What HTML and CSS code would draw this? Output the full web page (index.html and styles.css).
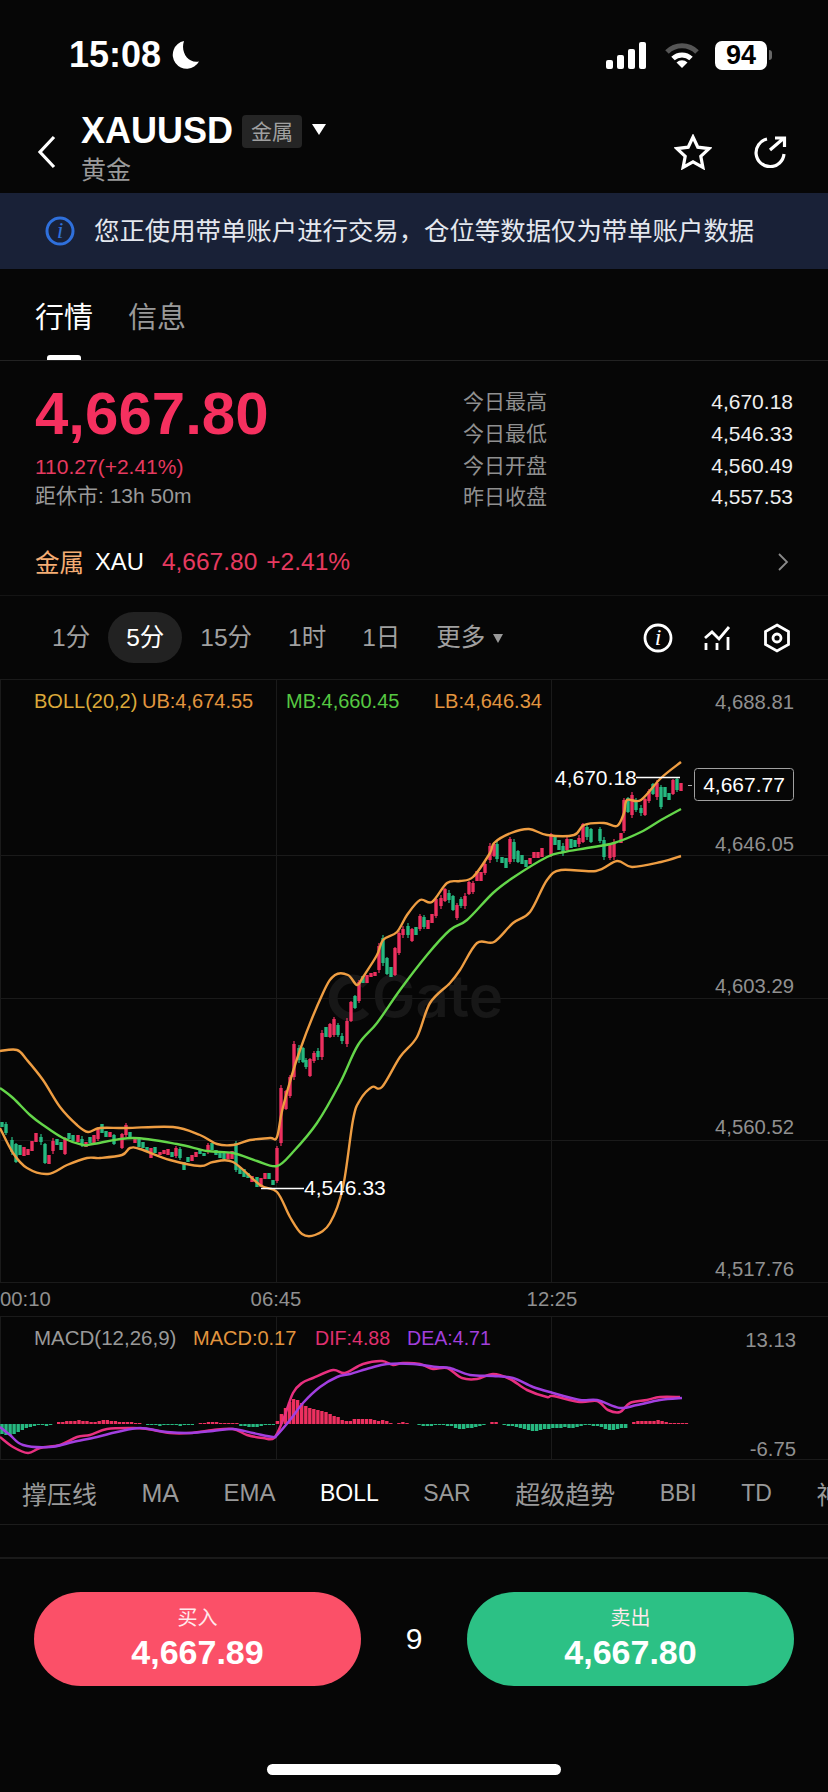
FILE: index.html
```html
<!DOCTYPE html>
<html lang="zh-CN">
<head>
  <meta charset="utf-8">
  <title>XAUUSD 黄金</title>
  <link rel="stylesheet" href="styles.css">
</head>
<body>
  <div class="page">

    <div class="statusBar">
      <span class="clock">15:08</span>
      <svg class="moon" width="30" height="30" viewBox="0 0 30 30">
        <path class="fillWhite" d="M14 1a14 14 0 1 0 15 20.500C19 24 10 13 14 1z"/>
      </svg>
      <span class="statusFill"></span>
      <svg class="signal" width="41" height="27" viewBox="0 0 41 27">
        <rect class="fillWhite" x="0" y="18" width="7" height="9" rx="2"/>
        <rect class="fillWhite" x="11" y="13" width="7" height="14" rx="2"/>
        <rect class="fillWhite" x="22" y="7" width="7" height="20" rx="2"/>
        <rect class="fillWhite" x="33" y="0" width="7" height="27" rx="2"/>
      </svg>
      <svg class="wifi" width="36" height="27" viewBox="0 0 36 27">
        <path class="wifiDim" d="M3 10a21 21 0 0 1 30 0"/>
        <path class="wifiOn" d="M9 16.500a13 13 0 0 1 18 0"/>
        <path class="fillWhite" d="M18 26l-5.500-5.500a8 8 0 0 1 11 0z"/>
      </svg>
      <span class="battery">94</span>
      <span class="batteryNub"></span>
    </div>

    <div class="navBar">
      <svg class="backIcon" width="20" height="34" viewBox="0 0 20 34">
        <path class="strokeWhite" d="M17 2L3 17l14 15"/>
      </svg>
      <div class="navTitle">
        <div class="symbolRow">
          <span class="symbol">XAUUSD</span>
          <span class="symbolTag">金属</span>
          <span class="caretDown"></span>
        </div>
        <div class="symbolName">黄金</div>
      </div>
      <svg class="starIcon" width="38" height="36" viewBox="0 0 38 36">
        <path class="strokeWhite" d="M19 3l4.800 10.200 11.200 1.400-8.200 7.700 2.100 11.100L19 27.900 9.100 33.400l2.100-11.100L3 14.600l11.200-1.400z"/>
      </svg>
      <svg class="shareIcon" width="34" height="32" viewBox="0 0 34 32">
        <path class="strokeWhite" d="M14 3A14 14 0 1 0 31 18"/>
        <path class="strokeWhite" d="M17 14L31 2M22 2h9.500v9"/>
      </svg>
    </div>

    <div class="notice">
      <svg class="noticeIcon" width="30" height="30" viewBox="0 0 30 30">
        <circle class="blueRing" cx="15" cy="15" r="13"/>
        <text class="noticeI" x="15" y="22" text-anchor="middle">i</text>
      </svg>
      <span class="noticeText">您正使用带单账户进行交易，仓位等数据仅为带单账户数据</span>
    </div>

    <div class="tabs">
      <span class="tab tabOn">行情</span>
      <span class="tab">信息</span>
      <span class="tabLine"></span>
    </div>

    <div class="quote">
      <div class="quoteTop">
        <div class="quoteLeft">
          <div class="lastPrice">4,667.80</div>
          <div class="priceChange">110.27(+2.41%)</div>
          <div class="closeTime">距休市: 13h 50m</div>
        </div>
        <div class="quoteStats">
          <span class="statName">今日最高</span><span class="statValue">4,670.18</span>
          <span class="statName">今日最低</span><span class="statValue">4,546.33</span>
          <span class="statName">今日开盘</span><span class="statValue">4,560.49</span>
          <span class="statName">昨日收盘</span><span class="statValue">4,557.53</span>
        </div>
      </div>
      <div class="sector">
        <span class="sectorName">金属</span>
        <span class="sectorCode">XAU</span>
        <span class="sectorPrice">4,667.80</span>
        <span class="sectorPct">+2.41%</span>
        <span class="statusFill"></span>
        <svg width="12" height="20" viewBox="0 0 12 20">
          <path class="strokeGrey" d="M2 2l8 8-8 8"/>
        </svg>
      </div>
    </div>

    <div class="intervals">
      <span class="interval">1分</span>
      <span class="interval intervalOn">5分</span>
      <span class="interval">15分</span>
      <span class="interval">1时</span>
      <span class="interval">1日</span>
      <span class="interval">更多</span>
      <span class="caretSmall"></span>
      <span class="statusFill"></span>
      <svg class="toolIcon" width="30" height="30" viewBox="0 0 30 30">
        <circle class="strokeThin" cx="15" cy="15" r="13"/>
        <text class="toolI" x="15" y="22" text-anchor="middle">i</text>
      </svg>
      <svg class="toolIcon toolChart" width="28" height="26" viewBox="0 0 28 26">
        <path class="strokeThin" d="M2 13l7-6 7 7 10-12M3 18v7M14 18v7M25 12v13"/>
      </svg>
      <svg class="toolIcon toolHex" width="30" height="30" viewBox="0 0 30 30">
        <path class="strokeThin" d="M15 2l11.500 6.500v13L15 28 3.500 21.500v-13z"/>
        <circle class="strokeThin" cx="15" cy="15" r="4"/>
      </svg>
    </div>

    <!-- chart uses page coordinates, viewBox starts at the top of the chart -->
    <svg class="chart" width="828" height="781" viewBox="0 679 828 781">
      <g class="grid">
        <path d="M0 679.500H828M0 855.500H828M0 998.500H828M0 1140.500H828M0 1282.500H828M0 1316.500H828M0 1459.500H828"/>
        <path d="M.5 679V1282M276.500 679V1282M551.500 679V1282M.5 1316V1460M276.500 1316V1460M551.500 1316V1460"/>
      </g>

      <g class="watermark">
        <path class="markRing" d="M366 985a19 19 0 1 0 0 26"/>
        <text class="markText" x="372" y="1017">Gate</text>
      </g>

      <g id="candles"></g>

      <polyline class="smooth band bandOuter" points="0,1051 17,1050 27,1060 43,1080 60,1107 77,1125 88,1132 100,1128 127,1128 173,1127 200,1135 217,1144 233,1145 250,1140 270,1138 277,1137 283,1107 300,1050 323,993 335,975 348,975 357,985 363,977 377,955 383,940 397,932 407,915 420,900 432,902 447,883 460,881 473,877 490,853 494,843 511,833 529,829 547,835 574,835 584,825 604,823 617,826 624,813 627,800 641,800 661,778 681,762"/>
      <polyline class="smooth band bandMid" points="0,1088 13,1098 30,1115 43,1125 63,1138 83,1145 93,1144 133,1138 177,1144 207,1151 233,1153 257,1161 277,1166 293,1152 317,1123 340,1083 358,1045 377,1023 400,990 427,955 450,930 467,920 493,893 514,877 547,857 564,852 587,848 614,843 641,832 661,820 681,809"/>
      <polyline class="smooth band bandOuter" points="0,1128 13,1153 27,1168 48,1174 67,1165 87,1158 100,1158 122,1155 130,1148 140,1149 170,1160 200,1166 213,1162 233,1162 260,1185 277,1192 290,1217 302,1234 315,1235 330,1223 343,1187 353,1120 360,1100 372,1087 382,1087 400,1057 417,1037 430,1003 450,983 460,970 477,943 494,942 513,923 530,912 547,880 561,870 596,871 617,861 632,867 661,862 681,856"/>

      <text class="legend legBoll" x="34" y="708">BOLL(20,2)</text>
      <text class="legend legUb" x="142" y="708">UB:4,674.55</text>
      <text class="legend legMb" x="286" y="708">MB:4,660.45</text>
      <text class="legend legUb" x="434" y="708">LB:4,646.34</text>

      <text class="axis" x="715" y="709">4,688.81</text>
      <text class="axis" x="715" y="851">4,646.05</text>
      <text class="axis" x="715" y="993">4,603.29</text>
      <text class="axis" x="715" y="1134">4,560.52</text>
      <text class="axis" x="715" y="1276">4,517.76</text>

      <path class="marker" d="M636 777.500H680M261 1188.500H304"/>
      <text class="extreme" x="555" y="785">4,670.18</text>
      <text class="extreme" x="304" y="1195">4,546.33</text>

      <path class="priceDash" d="M688 785.500H692"/>
      <rect class="priceBox" x="694.500" y="768.500" width="99" height="32" rx="3"/>
      <text class="priceTag" x="744" y="792" text-anchor="middle">4,667.77</text>

      <text class="axis" x="0" y="1306">00:10</text>
      <text class="axis" x="276" y="1306" text-anchor="middle">06:45</text>
      <text class="axis" x="552" y="1306" text-anchor="middle">12:25</text>

      <text class="legend legMacd" x="34" y="1345">MACD(12,26,9)</text>
      <text class="legend legUb" x="193" y="1345">MACD:0.17</text>
      <text class="legend legDif" x="315" y="1345">DIF:4.88</text>
      <text class="legend legDea" x="407" y="1345">DEA:4.71</text>
      <text class="axis" x="796" y="1347" text-anchor="end">13.13</text>
      <text class="axis" x="796" y="1456" text-anchor="end">-6.75</text>

      <g id="histogram"></g>
      <polyline class="smooth macdLine dif" points="0,1437 13,1447 28,1453 40,1448 60,1445 77,1437 90,1435 107,1429 133,1428 147,1429 170,1433 190,1433 213,1430 233,1429 247,1435 263,1438 274,1438 283,1420 293,1393 302,1383 313,1378 333,1370 345,1373 363,1364 382,1361 393,1365 403,1363 420,1364 433,1369 447,1368 462,1378 477,1379 493,1374 510,1379 527,1390 547,1397 553,1396 580,1402 597,1401 608,1410 620,1412 630,1403 647,1400 660,1397 680,1397"/>
      <polyline class="smooth macdLine dea" points="0,1427 10,1435 23,1445 50,1447 73,1442 97,1437 117,1432 140,1428 167,1432 190,1433 213,1431 233,1429 253,1433 273,1437 277,1435 290,1420 303,1403 320,1387 337,1377 350,1374 370,1368 387,1364 413,1364 437,1367 450,1368 470,1375 493,1376 513,1378 533,1387 553,1393 580,1400 597,1400 620,1408 637,1405 660,1400 682,1398"/>
    </svg>

    <div class="indicators">
      <span class="indicatorCjk">撑压线</span>
      <span class="indicatorWide">MA</span>
      <span class="indicatorEma">EMA</span>
      <span class="indicatorOn">BOLL</span>
      <span>SAR</span>
      <span class="indicatorCjk">超级趋势</span>
      <span>BBI</span>
      <span>TD</span>
      <span class="indicatorCjk">神奇九转</span>
    </div>
    <div class="indicatorGap"></div>

    <div class="trade">
      <div class="tradeButton buy">
        <span class="tradeLabel">买入</span>
        <span class="tradePrice">4,667.89</span>
      </div>
      <div class="spread">9</div>
      <div class="tradeButton sell">
        <span class="tradeLabel">卖出</span>
        <span class="tradePrice">4,667.80</span>
      </div>
    </div>
    <div class="homeBar"></div>

  </div>
  <script src="chart.js"></script>
</body>
</html>
```

FILE: styles.css
```css
* {
    box-sizing: border-box;
}

body {
    margin: 0;
    background: #060606;
    color: #ffffff;
    font-family: "Liberation Sans", "Noto Sans CJK SC", sans-serif;
}

.page {
    width: 828px;
    height: 1792px;
    overflow: hidden;
}

.fillWhite {
    fill: #ffffff;
}

.strokeWhite {
    fill: none;
    stroke: #ffffff;
    stroke-width: 3.2;
}

.strokeGrey {
    fill: none;
    stroke: #8a8a8a;
    stroke-width: 1.800;
}

.strokeThin {
    fill: none;
    stroke: #ffffff;
    stroke-width: 2.800;
}

/* status bar */
.statusBar {
    display: flex;
    align-items: center;
    height: 100px;
    padding: 10px 56px 0 69px;
}

.statusFill {
    flex: 1;
}

.clock {
    font-size: 36px;
    font-weight: bold;
}

.moon {
    margin-left: 9px;
}

.wifi {
    margin-left: 17px;
}

.wifiDim {
    fill: none;
    stroke: #555555;
    stroke-width: 5;
}

.wifiOn {
    fill: none;
    stroke: #ffffff;
    stroke-width: 5;
}

.battery {
    width: 52px;
    height: 29px;
    margin-left: 15px;
    background: #ffffff;
    border-radius: 7px;
    color: #000000;
    font-size: 27px;
    font-weight: bold;
    line-height: 29px;
    text-align: center;
}

.batteryNub {
    width: 3px;
    height: 10px;
    margin-left: 2px;
    background: #666666;
    border-radius: 0 3px 3px 0;
}

/* nav */
.navBar {
    display: flex;
    align-items: flex-start;
    height: 93px;
    padding-left: 37px;
}

.backIcon {
    margin-top: 35px;
}

.navTitle {
    width: 593px;
    margin-left: 24px;
    padding-top: 13px;
}

.symbolRow {
    display: flex;
    align-items: center;
    height: 36px;
}

.symbol {
    font-size: 36px;
    font-weight: bold;
}

.symbolTag {
    width: 60px;
    height: 33px;
    margin-left: 9px;
    background: #252525;
    border-radius: 4px;
    color: #a0a0a0;
    font-size: 21px;
    line-height: 33px;
    text-align: center;
}

.caretDown {
    width: 0;
    height: 0;
    margin: 0 0 3px 10px;
    border-top: 11px solid #ffffff;
    border-left: 7px solid transparent;
    border-right: 7px solid transparent;
}

.symbolName {
    margin-top: 6px;
    color: #9a9a9a;
    font-size: 25px;
    line-height: 30px;
}

.starIcon {
    margin-top: 34px;
}

.shareIcon {
    margin: 36px 0 0 41px;
}

/* notice */
.notice {
    display: flex;
    align-items: center;
    height: 76px;
    padding-left: 45px;
    background: #192137;
    color: #e4e7ee;
    font-size: 25.400px;
}

.noticeIcon {
    margin-right: 19px;
}

.noticeText {
    margin-bottom: 4px;
}

.blueRing {
    fill: none;
    stroke: #2f70dc;
    stroke-width: 3;
}

.noticeI {
    fill: #2f70dc;
    font-family: "Liberation Serif", serif;
    font-size: 24px;
    font-style: italic;
}

/* tabs */
.tabs {
    display: flex;
    position: relative;
    gap: 35px;
    height: 92px;
    padding: 29px 0 0 35px;
    border-bottom: 1px solid #222222;
}

.tab {
    color: #999999;
    font-size: 29px;
    line-height: 40px;
}

.tabOn {
    color: #ffffff;
}

.tabLine {
    position: absolute;
    left: 47px;
    bottom: 0;
    width: 34px;
    height: 5px;
    background: #ffffff;
    border-radius: 3px 3px 0 0;
}

/* quote */
.quote {
    height: 235px;
    border-bottom: 1px solid #141414;
}

.quoteTop {
    display: flex;
    justify-content: space-between;
    height: 167px;
    padding: 23px 35px 0;
}

.lastPrice {
    color: #f5305f;
    font-size: 60px;
    font-weight: bold;
    line-height: 60px;
}

.priceChange {
    margin-top: 11px;
    color: #e63a60;
    font-size: 21px;
    line-height: 24px;
}

.closeTime {
    margin-top: 5px;
    color: #999999;
    font-size: 21px;
    line-height: 24px;
}

.quoteStats {
    display: grid;
    grid-template-columns: 84px 246px;
    grid-auto-rows: 31.700px;
    align-items: center;
    width: 330px;
    margin-top: 2px;
}

.statName {
    color: #909090;
    font-size: 21px;
    line-height: 31px;
}

.statValue {
    color: #eeeeee;
    font-size: 21px;
    line-height: 31px;
    text-align: right;
}

.sector {
    display: flex;
    align-items: center;
    height: 67px;
    padding: 0 39px 0 35px;
    font-size: 24.500px;
}

.sectorName {
    color: #f4ad74;
}

.sectorCode {
    margin-left: 11px;
    font-size: 23.800px;
}

.sectorPrice {
    margin-left: 18px;
    color: #e63a60;
}

.sectorPct {
    margin-left: 9px;
    color: #e63a60;
}

/* intervals */
.intervals {
    display: flex;
    align-items: center;
    height: 83px;
    padding: 0 36px 0 34px;
}

.interval {
    height: 51px;
    padding: 0 18px;
    border-radius: 26px;
    color: #a0a0a0;
    font-size: 24.500px;
    line-height: 51px;
}

.intervalOn {
    background: #222222;
    color: #ffffff;
}

.caretSmall {
    width: 0;
    height: 0;
    margin: 2px 0 0 -10px;
    border-top: 9px solid #999999;
    border-left: 5.500px solid transparent;
    border-right: 5.500px solid transparent;
}

.toolI {
    fill: #ffffff;
    font-family: "Liberation Serif", serif;
    font-size: 24px;
    font-style: italic;
}

.toolChart {
    margin-left: 30px;
}

.toolHex {
    margin-left: 31px;
}

/* chart */
.chart {
    display: block;
}

.grid path {
    fill: none;
    stroke: #1a1a1a;
    stroke-width: 1;
}

.markRing {
    fill: none;
    stroke: #171717;
    stroke-width: 9;
}

.markText {
    fill: #171717;
    font-family: Inter, "Liberation Sans", sans-serif;
    font-size: 58px;
    font-weight: 600;
}

.band {
    fill: none;
    stroke-width: 2.400;
    stroke-linejoin: round;
}

.bandOuter {
    stroke: #ee9d42;
}

.bandMid {
    stroke: #64d64a;
}

.legend {
    font-size: 20px;
}

.legBoll {
    fill: #dba93a;
}

.legUb {
    fill: #e2953f;
}

.legMb {
    fill: #56c842;
}

.legMacd {
    fill: #999999;
    font-size: 20.500px;
}

.legDif {
    fill: #e0306f;
    font-size: 19.600px;
}

.legDea {
    fill: #a23fdc;
    font-size: 19.600px;
}

.axis {
    fill: #909090;
    font-size: 20.300px;
}

.extreme {
    fill: #ffffff;
    font-size: 21px;
}

.marker {
    fill: none;
    stroke: #ffffff;
    stroke-width: 1.500;
}

.priceDash {
    fill: none;
    stroke: #aaaaaa;
    stroke-width: 1;
}

.priceBox {
    fill: #060606;
    stroke: #a0a0a0;
    stroke-width: 1;
}

.priceTag {
    fill: #ffffff;
    font-size: 21px;
}

.wick {
    fill: none;
    stroke-width: 1.200;
}

.body {
    fill: none;
    stroke-width: 3.400;
}

.up {
    stroke: #ec305f;
}

.down {
    stroke: #26b880;
}

.macdLine {
    fill: none;
    stroke-width: 2.500;
    stroke-linejoin: round;
}

.dif {
    stroke: #e8307f;
}

.dea {
    stroke: #a23fe0;
}

/* indicator tabs */
.indicators {
    display: flex;
    align-items: center;
    gap: 44.500px;
    height: 65px;
    padding: 2px 0 0 22px;
    border-bottom: 1px solid #1c1c1c;
    color: #999999;
    font-size: 23px;
    white-space: nowrap;
}

.indicators span {
    flex: none;
}

.indicatorCjk,
.indicatorWide {
    font-size: 25px;
}

.indicators .indicatorEma {
    font-size: 24px;
}

.indicatorOn {
    color: #ffffff;
}

.indicatorGap {
    height: 34px;
    border-bottom: 2px solid #1a1a1a;
}

/* buy and sell */
.trade {
    display: flex;
    align-items: center;
    height: 94px;
    margin-top: 33px;
    padding: 0 34px;
}

.tradeButton {
    display: flex;
    flex-direction: column;
    align-items: center;
    width: 327px;
    height: 94px;
    padding-top: 14px;
    border-radius: 47px;
}

.buy {
    background: #fb5068;
}

.sell {
    background: #2cc185;
}

.tradeLabel {
    color: #ffe9ec;
    font-size: 20px;
    line-height: 24px;
}

.tradePrice {
    margin-top: 2px;
    font-size: 34px;
    font-weight: bold;
    line-height: 40px;
}

.spread {
    flex: 1;
    font-size: 30px;
    text-align: center;
}

.homeBar {
    width: 294px;
    height: 11px;
    margin: 78px 0 0 267px;
    background: #ffffff;
    border-radius: 6px;
}
```

FILE: chart.js
```js
// candles as [x, high, low] in page pixels
var red = [[24,1147,1156],[28,1149,1155],[32,1141,1151],[36,1133,1142],[49,1155,1164],[53,1138,1154],[65,1137,1155],[78,1135,1142],[86,1142,1147],[94,1135,1143],[98,1127,1141],[110,1132,1137],[122,1133,1149],[126,1123,1137],[135,1138,1143],[151,1148,1158],[160,1152,1155],[164,1150,1154],[168,1149,1155],[176,1146,1158],[192,1155,1161],[196,1152,1157],[208,1143,1154],[228,1153,1159],[232,1151,1159],[252,1176,1182],[261,1178,1187],[265,1173,1179],[277,1146,1183],
    [281,1085,1146],[286,1090,1110],[290,1075,1098],[294,1041,1080],[310,1058,1077],[314,1051,1063],[322,1030,1060],[330,1023,1038],[334,1017,1037],[347,1018,1047],[351,1001,1022],[359,980,1003],[367,975,983],[371,973,977],[375,972,976],[379,943,973],[395,947,976],[399,931,955],[403,926,938],[412,928,942],[420,914,931],[428,920,929],[432,914,923],[436,897,918],[441,895,909],[445,888,902],[457,903,920],[465,893,909],[469,881,895],[473,881,894],[477,871,881],[481,872,881],[485,862,875],[490,843,863],[494,843,857],
    [510,837,864],[530,858,864],[534,852,858],[538,852,858],[542,848,857],[551,833,857],[567,837,852],[579,835,847],[583,823,843],[610,843,860],[614,839,860],[621,833,843],[624,798,833],[632,792,818],[645,798,816],[649,789,803],[657,780,800],[673,779,795],[681,783,791]];

var green = [[2,1122,1127],[6,1122,1135],[12,1137,1155],[16,1143,1163],[20,1145,1155],[41,1134,1145],[45,1143,1164],[57,1139,1145],[61,1142,1150],[69,1133,1139],[73,1135,1141],[82,1136,1147],[90,1137,1143],[102,1124,1133],[106,1131,1137],[114,1134,1145],[130,1132,1138],[139,1138,1147],[143,1142,1148],[147,1147,1151],[155,1147,1153],[172,1152,1157],[180,1147,1160],[184,1162,1170],[188,1157,1162],[200,1150,1154],[204,1153,1156],[212,1143,1150],[216,1150,1155],[220,1153,1158],[224,1153,1159],[236,1141,1172],[240,1167,1174],[244,1169,1177],[248,1173,1178],[257,1177,1187],[269,1173,1179],[273,1180,1185],
    [299,1045,1063],[303,1047,1063],[306,1058,1069],[318,1048,1060],[326,1027,1037],[338,1023,1037],[342,1033,1044],[355,995,1009],[363,976,983],[383,935,966],[387,957,975],[391,967,977],[408,923,938],[416,927,935],[424,915,929],[449,890,903],[453,895,911],[461,897,908],
    [497,841,862],[502,857,863],[506,858,868],[514,839,862],[518,850,863],[522,855,864],[526,860,867],[555,835,845],[559,840,850],[563,843,856],[571,839,848],[575,840,847],[587,824,840],[591,828,843],[600,827,843],[604,837,860],[628,797,813],[636,798,812],[641,805,816],[653,783,795],[661,785,809],[665,787,797],[669,793,800],[677,777,792]];

// macd bars, one every 4.05px, positive goes up
var macd = [-10,-11,-11,-10,-8,-6,-4,-3,-2,-1,-1,-2,-1,0,
    2,2,3,3,3,4,3,3,2,2,3,4,4,3,3,2,2,2,2,1,1,0,
    -1,-1,-1,-2,-1,-1,-1,-1,-2,-1,-1,-1,0,
    1,1,2,2,2,1,1,1,1,1,
    -2,-2,-3,-3,-3,-2,-1,-1,-1,
    3,10,16,22,25,24,21,18,16,15,14,13,12,10,8,7,4,3,3,5,5,5,5,5,4,3,4,3,1,0,1,2,1,0,0,
    -1,-2,-2,-2,-1,-1,-1,-2,-2,-4,-5,-5,-4,-4,-3,-2,-1,0,2,2,0,
    -1,-2,-2,-3,-4,-5,-6,-7,-7,-6,-5,-5,-4,-4,-4,-3,-4,-4,-3,-2,-1,-1,-2,-2,-3,-5,-6,-6,-5,-4,-4,0,
    2,3,3,3,3,3,4,3,2,1,1,1,1,1];
var MACD_ZERO = 1424;

var SVG_NS = "http://www.w3.org/2000/svg";

function addPath(parent, cls, d) {
    var p = document.createElementNS(SVG_NS, "path");
    p.setAttribute("class", cls);
    p.setAttribute("d", d);
    parent.appendChild(p);
}

function drawCandles(parent, list, colour) {
    var wicks = "";
    var bodies = "";
    list.forEach(function (c, i) {
        var len = c[2] - c[1];
        var cut = len > 10 ? 1 + (i % 3) : 0;
        wicks += "M" + c[0] + " " + c[1] + "V" + c[2];
        bodies += "M" + c[0] + " " + (c[1] + cut) + "V" + (c[2] - cut);
    });
    addPath(parent, "wick " + colour, wicks);
    addPath(parent, "body " + colour, bodies);
}

function drawMacd(parent) {
    var up = "";
    var down = "";
    macd.forEach(function (h, i) {
        var x = (2 + i * 4.05).toFixed(1);
        var seg = "M" + x + " " + MACD_ZERO + "V" + (MACD_ZERO - h);
        if (h > 0) up += seg;
        if (h < 0) down += seg;
    });
    addPath(parent, "body up", up);
    addPath(parent, "body down", down);
}

// catmull-rom through the traced points, the lines on the app are curved
function smoothLine(line) {
    var pts = line.getAttribute("points").split(" ").map(function (s) {
        return s.split(",").map(Number);
    });
    var d = "M" + pts[0][0] + " " + pts[0][1];
    for (var i = 0; i < pts.length - 1; i++) {
        var p0 = pts[Math.max(i - 1, 0)];
        var p1 = pts[i];
        var p2 = pts[i + 1];
        var p3 = pts[Math.min(i + 2, pts.length - 1)];
        d += "C" + (p1[0] + (p2[0] - p0[0]) / 6).toFixed(1) + " " + (p1[1] + (p2[1] - p0[1]) / 6).toFixed(1)
            + " " + (p2[0] - (p3[0] - p1[0]) / 6).toFixed(1) + " " + (p2[1] - (p3[1] - p1[1]) / 6).toFixed(1)
            + " " + p2[0] + " " + p2[1];
    }
    var path = document.createElementNS(SVG_NS, "path");
    path.setAttribute("class", line.getAttribute("class"));
    path.setAttribute("d", d);
    line.parentNode.replaceChild(path, line);
}

var candleGroup = document.getElementById("candles");
drawCandles(candleGroup, green, "down");
drawCandles(candleGroup, red, "up");
drawMacd(document.getElementById("histogram"));
Array.prototype.slice.call(document.querySelectorAll(".smooth")).forEach(smoothLine);
```
